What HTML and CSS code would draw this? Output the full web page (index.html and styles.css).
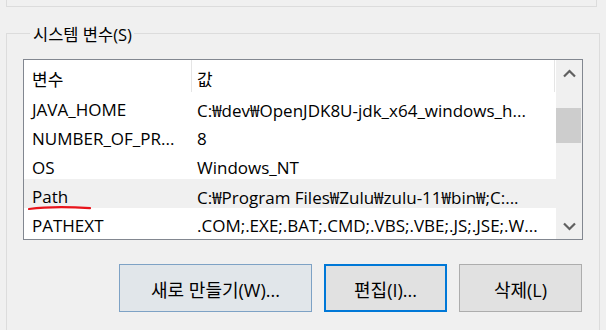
FILE: index.html
```html
<!DOCTYPE html>
<html lang="ko">
<head>
  <meta charset="UTF-8" />
  <title>환경 변수</title>
  <link rel="stylesheet" href="styles.css">
</head>
<body>
  <div class="user-group"></div>

  <div class="group">
    <div class="group-title">시스템 변수(S)</div>

    <div class="listbox">
      <div class="list">
        <div class="list-head">
          <div class="col-name">변수</div>
          <div class="col-value">값</div>
        </div>
        <div class="row">
          <div class="col-name">JAVA_HOME</div>
          <div class="col-value">C:₩dev₩OpenJDK8U-jdk_x64_windows_h...</div>
        </div>
        <div class="row">
          <div class="col-name">NUMBER_OF_PR...</div>
          <div class="col-value">8</div>
        </div>
        <div class="row">
          <div class="col-name">OS</div>
          <div class="col-value">Windows_NT</div>
        </div>
        <div class="row selected">
          <div class="col-name">Path</div>
          <div class="col-value">C:₩Program Files₩Zulu₩zulu-11₩bin₩;C:...</div>
          <svg class="mark" width="64" height="6" viewBox="0 0 64 6">
            <path d="M1 4 C 16 2, 40 1.6, 62 3.2" fill="none" stroke="#e8141b" stroke-width="2.2" stroke-linecap="round"/>
          </svg>
        </div>
        <div class="row">
          <div class="col-name">PATHEXT</div>
          <div class="col-value">.COM;.EXE;.BAT;.CMD;.VBS;.VBE;.JS;.JSE;.W...</div>
        </div>
      </div>

      <div class="scrollbar">
        <div class="arrow">
          <svg width="13" height="9" viewBox="0 0 13 9"><path d="M1 7.5 L6.5 2 L12 7.5" fill="none" stroke="#606060" stroke-width="2.2"/></svg>
        </div>
        <div class="track">
          <div class="thumb"></div>
        </div>
        <div class="arrow">
          <svg width="13" height="9" viewBox="0 0 13 9"><path d="M1 1.5 L6.5 7 L12 1.5" fill="none" stroke="#606060" stroke-width="2.2"/></svg>
        </div>
      </div>
    </div>

    <div class="buttons">
      <button class="btn btn-new">새로 만들기(W)...</button>
      <button class="btn btn-edit">편집(I)...</button>
      <button class="btn">삭제(L)</button>
    </div>
  </div>
</body>
</html>
```

FILE: styles.css
```css
* {
  box-sizing: border-box;
}
body {
  margin: 0;
  background: #f0f0f0;
  font-family: "Open Sans", "Noto Sans CJK KR", sans-serif;
  font-size: 16px;
  color: #000;
  overflow: hidden;
}
.user-group {
  margin-left: 6px;
  width: 591px;
  height: 7px;
  border: 1px solid #dcdcdc;
  border-top: none;
}
.group {
  margin: 26px 0 0 6px;
  width: 594px;
  height: 297px;
  border: 1px solid #dcdcdc;
  border-bottom: none;
  padding: 0 0 0 16px;
}
.group-title {
  display: inline-block;
  margin: -11px 0 0 7px;
  padding: 0 2px 0 3px;
  background: #f0f0f0;
  font-size: 16.5px;
  line-height: 24px;
  vertical-align: top;
}
.listbox {
  margin-top: 3px;
  width: 560px;
  height: 181px;
  border: 1px solid #828790;
  background: #fff;
  display: flex;
}
.list {
  flex: 1;
  position: relative;
}
.list-head {
  display: flex;
  height: 32px;
  font-size: 17px;
}
.list-head .col-name,
.list-head .col-value {
  border-right: 1px solid #e5e5e5;
  height: 100%;
  display: flex;
  align-items: center;
  padding-top: 5px;
}
.row {
  display: flex;
  height: 29px;
  align-items: center;
  position: relative;
  font-size: 17px;
}
.row.selected {
  background: #f0f0f0;
}
.col-name {
  width: 168px;
  padding: 6px 0 0 8px;
  white-space: nowrap;
  overflow: hidden;
}
.col-value {
  width: 363px;
  padding: 6px 0 0 5px;
  white-space: nowrap;
  overflow: hidden;
}
.mark {
  position: absolute;
  left: 4px;
  top: 26px;
}
.scrollbar {
  width: 26px;
  background: #f0f0f0;
  display: flex;
  flex-direction: column;
}
.arrow {
  height: 26px;
  display: flex;
  align-items: center;
  justify-content: center;
}
.track {
  flex: 1;
  padding-top: 22px;
}
.thumb {
  width: 25px;
  height: 35px;
  background: #cdcdcd;
}
.buttons {
  display: flex;
  gap: 12px;
  margin: 24px 0 0 96px;
}
.btn {
  height: 48px;
  width: 123px;
  font-family: inherit;
  font-size: 18px;
  color: #000;
  background: #e1e1e1;
  border: 1px solid #adadad;
  padding: 2px 0 0;
}
.btn-new {
  width: 193px;
  background: #e1e6ea;
  border-color: #7ea2c5;
}
.btn-edit {
  border: 2px solid #0078d7;
}
```
